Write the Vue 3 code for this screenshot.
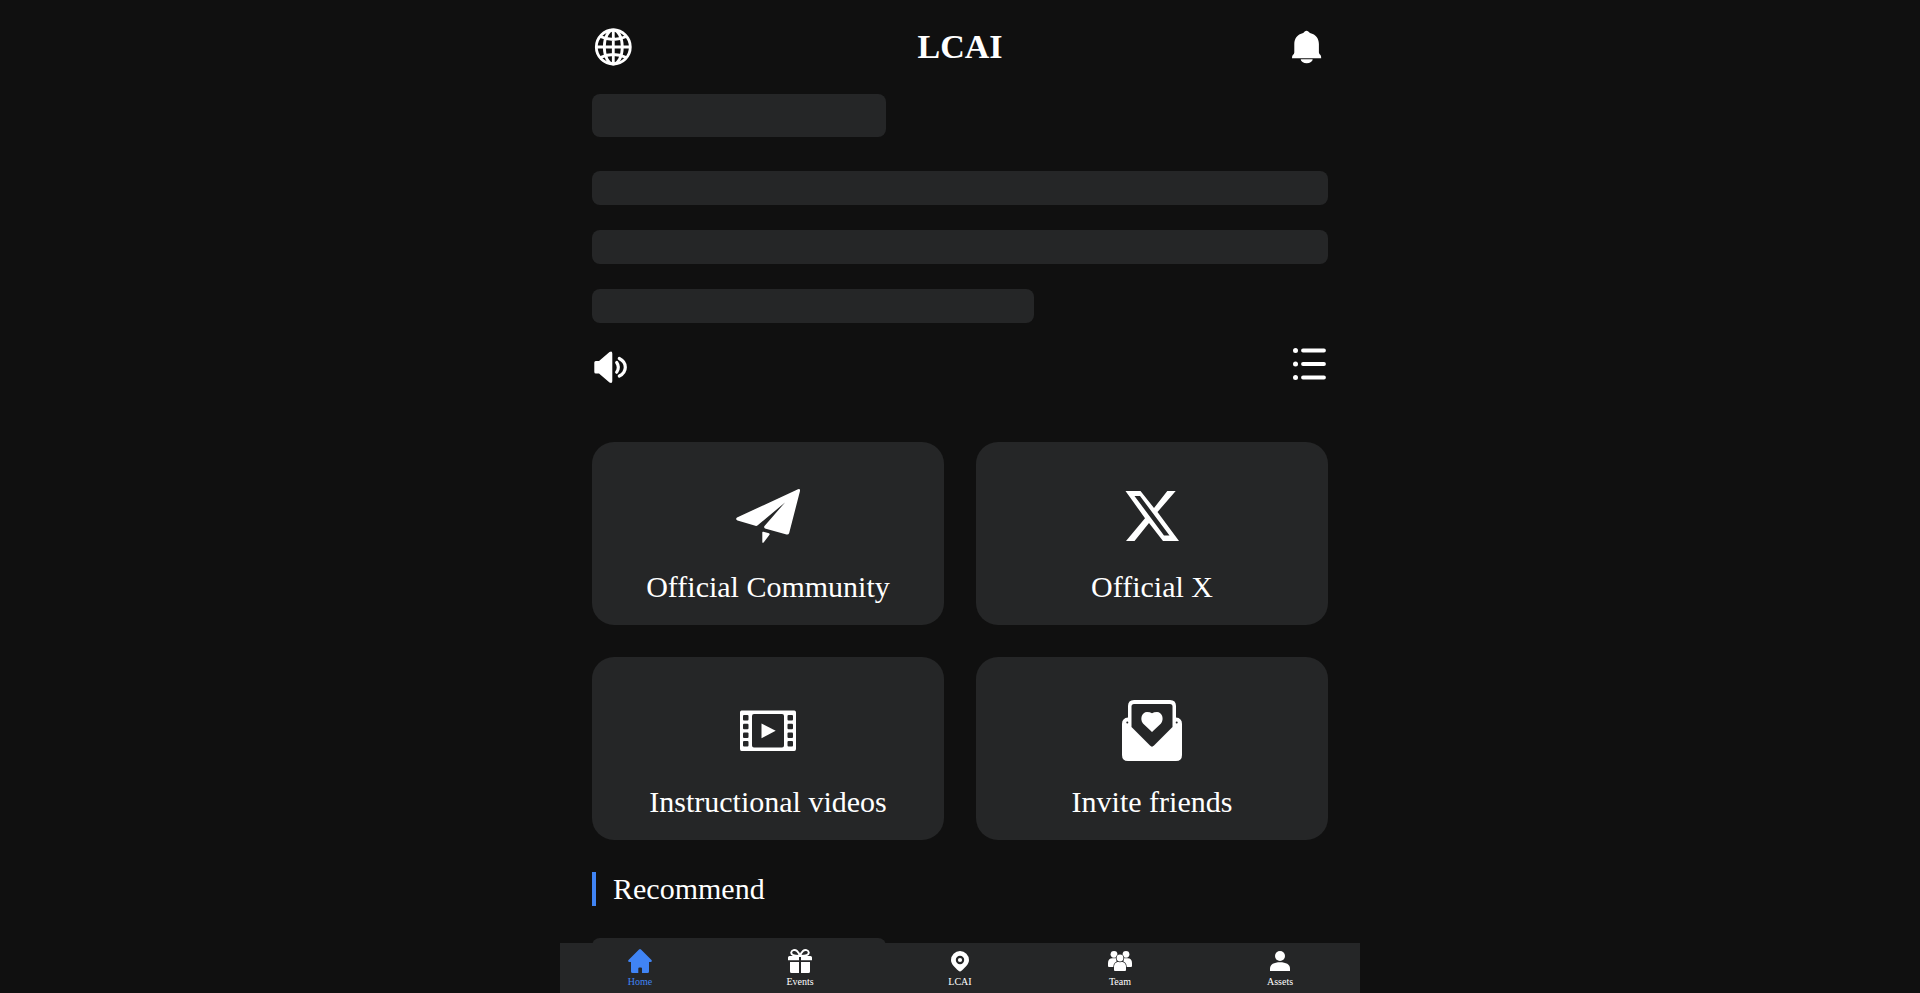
<script setup>
const cards = [
  { id: 'plane', label: 'Official Community' },
  { id: 'x', label: 'Official X' },
  { id: 'video', label: 'Instructional videos' },
  { id: 'invite', label: 'Invite friends' },
]
const tabs = [
  { id: 'home', label: 'Home', active: true },
  { id: 'events', label: 'Events' },
  { id: 'lcai', label: 'LCAI' },
  { id: 'team', label: 'Team' },
  { id: 'assets', label: 'Assets' },
]
const holes = [0, 1, 2, 3]
</script>

<template>
  <div class="app">
    <header class="header">
      <button class="icon-button" type="button" aria-label="Language">
        <svg class="icon" viewBox="0 0 40 40" fill="none" stroke="currentColor" stroke-width="2.8">
          <circle cx="21.300" cy="20" r="17" />
          <ellipse cx="21.300" cy="20" rx="9" ry="17" />
          <path d="M21.300 3v34M4.300 20h34M8.300 9.500Q21.300 15.500 34.300 9.500M8.300 30.500Q21.300 24.500 34.300 30.500" />
        </svg>
      </button>
      <h1 class="title">LCAI</h1>
      <button class="icon-button" type="button" aria-label="Notifications">
        <svg class="icon" viewBox="0 0 40 40" fill="currentColor">
          <path d="M16.700 4.500Q18.500 2.800 20.300 4.500L22 6C28 7.500 30.900 11.500 30.900 17V25.500Q31.100 27 32.500 28Q33.200 29 33.200 31.300H4Q4 29 4.800 28Q6.200 27 6.300 25.500V17C6.300 11.500 9.200 7.500 15.200 6Z" />
          <path d="M12.700 32.200h12a6 4 0 0 1-12 0Z" />
        </svg>
      </button>
    </header>

    <main class="content">
      <section class="skeleton" aria-hidden="true">
        <div class="bone heading"></div>
        <div class="bone"></div>
        <div class="bone"></div>
        <div class="bone short"></div>
      </section>

      <div class="notice">
        <button class="icon-button" type="button" aria-label="Announcements">
          <svg class="icon" viewBox="0 0 40 40" fill="currentColor">
            <path d="M2.300 15.500Q2.300 14 3.800 14H7L17.500 5Q20.300 3.500 20.300 6.500V34Q20.300 36.800 17.500 35.500L7 26.500H3.800Q2.300 26.500 2.300 25Z" />
            <path d="M24.700 15.500Q28 20.300 24.700 25.200M27.300 11.500C35.300 15.500 35.300 25 27.300 29" fill="none" stroke="currentColor" stroke-width="3.200" stroke-linecap="round" />
          </svg>
        </button>
        <button class="icon-button" type="button" aria-label="All announcements">
          <svg class="icon" viewBox="0 0 40 40" fill="currentColor">
            <circle cx="7.500" cy="3.500" r="2.500" />
            <circle cx="7.500" cy="17" r="2.500" />
            <circle cx="7.500" cy="30.500" r="2.500" />
            <path d="M15 3.500H36M15 17H36M15 30.500H36" stroke="currentColor" stroke-width="3.800" stroke-linecap="round" />
          </svg>
        </button>
      </div>

      <section class="cards">
        <button v-for="card in cards" :key="card.id" class="card" type="button">
          <svg class="card-icon" viewBox="0 0 64 64" fill="currentColor" aria-hidden="true">
            <template v-if="card.id === 'plane'">
              <path d="M62 5.200Q64.500 4.500 64 7L53.200 49Q52.500 51 50.500 50.500L29 44.500Q27.500 43.500 28.500 42L49 18.500L22 41Q20.500 42.500 18.500 41.500L1.500 36.500Q-1 35.500 1 33.500Z" />
              <path d="M26.300 48.500Q26.300 47.500 27.300 47.800L33 49.300Q34.200 49.800 33.500 50.800L28 58Q26.300 60 26.300 57.500Z" />
            </template>
            <path v-else-if="card.id === 'x'" fill-rule="evenodd" d="M5.500 7H20.500L34 24L47.300 7H55.700L37.500 28L59 57H43L29 39L14.500 57H6L25 34.200ZM14.500 12L44 51.500H49.500L20 12Z" />
            <template v-else-if="card.id === 'video'">
              <path fill-rule="evenodd" d="M5.500 11.500H58.300Q60 11.500 60 13.500V50Q60 52 58.300 52H5.500Q4 52 4 50V13.500Q4 11.500 5.500 11.500ZM18 15Q16 15 16 17V46.500Q16 48.500 18 48.500H46Q48 48.500 48 46.500V17Q48 15 46 15Z" />
              <path d="M25.500 24.500L39.700 31.800L25.500 39.200Z" />
              <g class="hole">
                <template v-for="n in holes" :key="n">
                  <rect x="7" :y="16 + n * 8.700" width="5.500" height="5.500" rx="1" />
                  <rect x="51.500" :y="16 + n * 8.700" width="5.500" height="5.500" rx="1" />
                </template>
              </g>
            </template>
            <template v-else>
              <path fill-rule="evenodd" d="M8 18.500V7Q8 1 14 1H50Q56 1 56 7V18.500Q62 19 62 25V56Q62 62 56 62H8Q2 62 2 56V25Q2 19 8 18.500ZM14 5Q11.500 5 11.500 7.500V28L30 46.500Q32 48.800 34 46.500L52.500 28V7.500Q52.500 5 50 5Z" />
              <path d="M32 33L23 24.500C19.500 20 22 13 27 13Q30 13 32 14.300Q34 13 37 13C42 13 44.500 20 41 24.500Z" />
              <g class="hole">
                <circle cx="7.300" cy="23.500" r="1" />
                <circle cx="56.700" cy="23.500" r="1" />
              </g>
            </template>
          </svg>
          <span class="card-label">{{ card.label }}</span>
        </button>
      </section>

      <h2 class="section-title">Recommend</h2>
      <div class="bone heading" aria-hidden="true"></div>
    </main>

    <nav class="tabbar">
      <a v-for="tab in tabs" :key="tab.id" class="tab" :class="{ active: tab.active }" :href="'#' + tab.id">
        <svg class="tab-icon" viewBox="0 0 24 24" fill="currentColor" aria-hidden="true">
          <path v-if="tab.id === 'home'" d="M11 .5Q12 -.5 13 .5L23.500 11Q24.500 12.800 22.500 13H21V22.500Q21 24 19.500 24H14V19.500Q14 18.500 13 18.500H11.500Q10.300 18.500 10.300 19.500V24H4.500Q3 24 3 22.500V13H1.500Q-.5 12.800 .5 11Z" />
          <template v-else-if="tab.id === 'events'">
            <path d="M1.500 7H11V11.300H0V8.500Q0 7 1.500 7ZM13 7H22.500Q24 7 24 8.500V11.300H13ZM2 13H11V24H3.500Q2 24 2 22.500ZM13 13H22V22.500Q22 24 20.500 24H13Z" />
            <path d="M11.500 7C6 7 3 6 3.200 3.600C3.500 .8 7 .2 9 2C10.500 3.300 11.500 5 11.500 7ZM12.500 7C18 7 21 6 20.800 3.600C20.500 .8 17 .2 15 2C13.500 3.300 12.500 5 12.500 7Z" fill="none" stroke="currentColor" stroke-width="1.900" />
          </template>
          <template v-else-if="tab.id === 'lcai'">
            <path fill-rule="evenodd" d="M12 2a9 9 0 0 1 9 9C21 15 17.500 18 13.500 21.800Q12 23 10.500 21.800C6.500 18 3 15 3 11a9 9 0 0 1 9-9ZM12 6.800a4.200 4.200 0 1 0 0 8.400a4.200 4.200 0 0 0 0-8.400Z" />
            <circle cx="12" cy="11" r="2.100" />
          </template>
          <template v-else-if="tab.id === 'team'">
            <circle cx="6" cy="5.300" r="3.400" />
            <circle cx="18" cy="5.300" r="3.400" />
            <path d="M0 17V14Q0 9.300 4.500 9.300H8.500V18H1Q0 18 0 17ZM24 17V14Q24 9.300 19.500 9.300H15.500V18H23Q24 18 24 17Z" />
            <g class="cutout">
              <path d="M6 21V18C6 14.500 8 12.700 12 12.700C16 12.700 18 14.500 18 18V21Q18 22 17 22H7Q6 22 6 21Z" />
              <circle cx="12" cy="9" r="3.400" />
            </g>
          </template>
          <template v-else>
            <circle cx="12" cy="7" r="5" />
            <path d="M2 22V19.500C2 15.500 6 13.300 12 13.300C18 13.300 22 15.500 22 19.500V22Z" />
          </template>
        </svg>
        <span>{{ tab.label }}</span>
      </a>
    </nav>
  </div>
</template>

<style>
html,
body {
  background: #101010;
}
body {
  margin: 0;
}
</style>

<style scoped>
.app {
  box-sizing: border-box;
  max-width: 800px;
  height: 100vh;
  margin: 0 auto;
  display: flex;
  flex-direction: column;
  overflow: hidden;
  color: #fff;
  background: #101010;
  font-family: "Liberation Serif", "Times New Roman", serif;
}
button {
  padding: 0;
  border: 0;
  background: none;
  color: inherit;
  font: inherit;
  cursor: pointer;
}
.header {
  flex: none;
  display: flex;
  align-items: center;
  justify-content: space-between;
  height: 94px;
  padding: 0 32px;
}
.icon-button,
.icon {
  display: block;
  width: 40px;
  height: 40px;
}
.title {
  margin: 0;
  font-size: 34px;
  line-height: 40px;
}
.content {
  flex: 1;
  min-height: 0;
  overflow: hidden;
  padding: 0 32px;
}
.skeleton {
  display: flex;
  flex-direction: column;
  gap: 25px;
}
.bone {
  height: 34px;
  border-radius: 8px;
  background: #252627;
}
.bone.heading {
  width: 40%;
  height: 43px;
}
.skeleton .heading {
  margin-bottom: 9px;
}
.bone.short {
  width: 60%;
}
.notice {
  display: flex;
  justify-content: space-between;
  margin: 24px 0 55px;
}
.cards {
  display: grid;
  grid-template-columns: 1fr 1fr;
  gap: 32px;
}
.card {
  display: flex;
  flex-direction: column;
  align-items: center;
  gap: 22px;
  padding: 42px 16px 21px;
  border-radius: 22px;
  background: #252627;
}
.card-icon {
  width: 64px;
  height: 64px;
}
.card-label {
  font-size: 30px;
  line-height: 34px;
}
.hole {
  fill: #252627;
}
.cutout {
  stroke: #252627;
  stroke-width: 1.5;
  paint-order: stroke;
}
.section-title {
  margin: 32px 0;
  padding-left: 17px;
  border-left: 4px solid #4084f4;
  font-size: 30px;
  font-weight: 400;
  line-height: 34px;
}
.tabbar {
  flex: none;
  display: flex;
  height: 50px;
  background: #252627;
}
.tab {
  flex: 1;
  display: flex;
  flex-direction: column;
  align-items: center;
  gap: 3px;
  padding-top: 6px;
  color: #fff;
  font-size: 10px;
  line-height: 12px;
  text-decoration: none;
}
.tab.active {
  color: #4084f4;
}
.tab-icon {
  width: 24px;
  height: 24px;
}
</style>
